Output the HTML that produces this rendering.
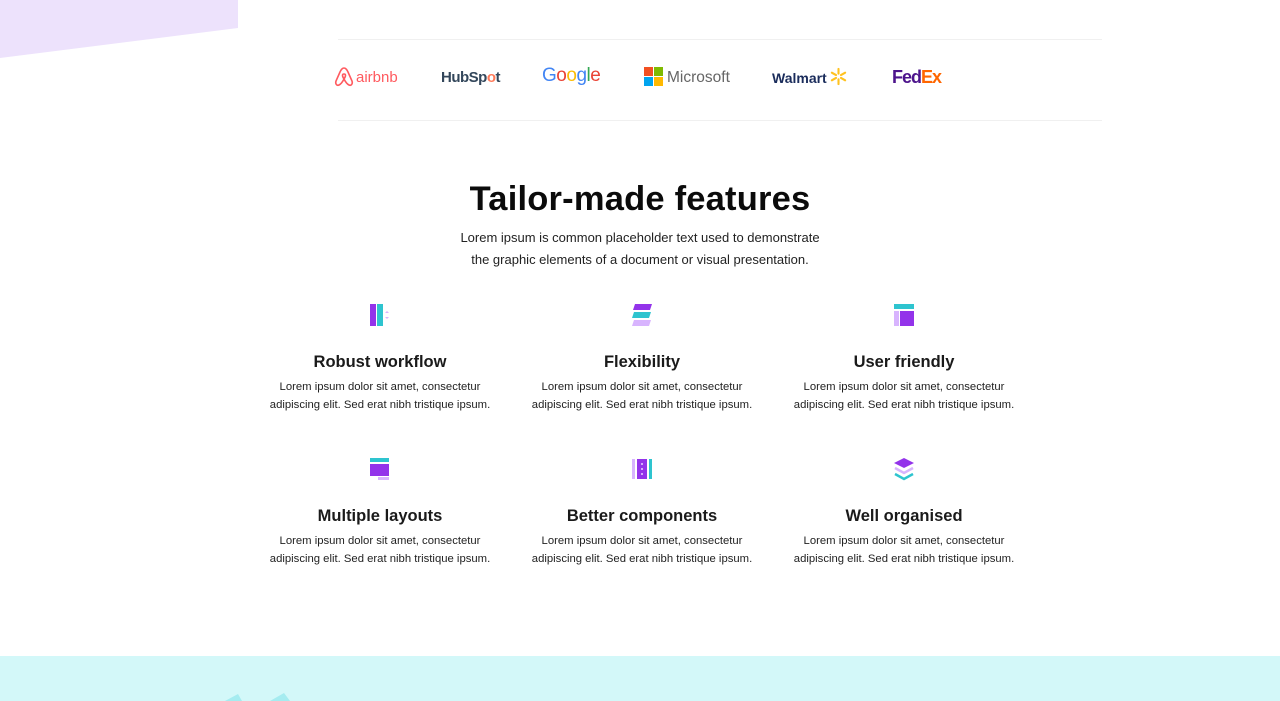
<!DOCTYPE html>
<html><head><meta charset="utf-8"><style>
*{margin:0;padding:0;box-sizing:border-box}
body{width:1280px;height:701px;overflow:hidden;background:#fff;font-family:"Liberation Sans",sans-serif;color:#111;position:relative}
.abs{position:absolute}
.line{position:absolute;left:338px;width:764px;height:1px;background:#f0f0f0}
.logo{position:absolute;top:68px;font-size:15px;font-weight:bold;line-height:20px}
h1{position:absolute;top:180px;left:0;width:1280px;text-align:center;font-size:34.5px;font-weight:bold;letter-spacing:0.2px;color:#0b0b0b}
.sub{position:absolute;top:227px;left:0;width:1280px;text-align:center;font-size:13px;line-height:22px;color:#222}
.f{position:absolute;width:262px;text-align:center}
.f svg{display:block;margin:0 auto}
.f h3{font-size:16.5px;font-weight:bold;color:#1a1a1a;margin-top:25px;line-height:20px}
.f p{font-size:11.3px;line-height:18px;color:#222;margin-top:6px}
</style></head><body>
<svg class="abs" style="left:0;top:0" width="240" height="60"><polygon points="0,0 238,0 238,28 0,58" fill="#ede2fc"/></svg>
<div class="line" style="top:39px"></div>
<div class="line" style="top:120px"></div>
<svg class="abs" style="left:334px;top:66px" width="20" height="21" viewBox="0 0 20 21"><path d="M10 2 C8 2 7 4 6 6 L2 15 C1 18 3 20 5 19 C7 18 9 15 10 13 C11 15 13 18 15 19 C17 20 19 18 18 15 L14 6 C13 4 12 2 10 2Z M10 13 C8 10 8 8 10 8 C12 8 12 10 10 13Z" fill="none" stroke="#ff5a5f" stroke-width="1.6"/></svg>
<div class="logo" style="left:356px;color:#ff5a5f;font-weight:normal;font-size:15px">airbnb</div>
<div class="logo" style="left:441px;color:#33475b;letter-spacing:-0.5px">HubSp<span style="color:#ff7a59">o</span>t</div>
<div class="logo" style="left:542px;top:66px;font-size:19px;font-weight:normal;letter-spacing:-0.5px"><span style="color:#4285f4">G</span><span style="color:#ea4335">o</span><span style="color:#fbbc05">o</span><span style="color:#4285f4">g</span><span style="color:#34a853">l</span><span style="color:#ea4335">e</span></div>
<svg class="abs" style="left:644px;top:67px" width="19" height="19"><rect width="9" height="9" fill="#f25022"/><rect x="10" width="9" height="9" fill="#7fba00"/><rect y="10" width="9" height="9" fill="#00a4ef"/><rect x="10" y="10" width="9" height="9" fill="#ffb900"/></svg>
<div class="logo" style="left:667px;color:#666;font-weight:normal;font-size:15.5px">Microsoft</div>
<div class="logo" style="left:772px;color:#1a2c5b;font-size:14px">Walmart</div>
<svg class="abs" style="left:829px;top:67px" width="19" height="19" viewBox="-10 -10 20 20"><g stroke="#ffc220" stroke-width="2.2" stroke-linecap="round"><line x1="0" y1="-3" x2="0" y2="-8"/><line x1="0" y1="3" x2="0" y2="8"/><line x1="2.6" y1="-1.5" x2="7" y2="-4"/><line x1="-2.6" y1="-1.5" x2="-7" y2="-4"/><line x1="2.6" y1="1.5" x2="7" y2="4"/><line x1="-2.6" y1="1.5" x2="-7" y2="4"/></g></svg>
<div class="logo" style="left:892px;top:67px;font-size:18px;letter-spacing:-1px"><span style="color:#4d148c">Fed</span><span style="color:#ff6600">Ex</span></div>

<h1>Tailor-made features</h1>
<div class="sub">Lorem ipsum is common placeholder text used to demonstrate<br>the graphic elements of a document or visual presentation.</div>

<div class="f" style="left:249px;top:303px">
<svg width="24" height="24" viewBox="0 0 24 24"><rect x="2" y="1" width="6" height="22" fill="#9333ea"/><rect x="9" y="1" width="6" height="22" fill="#2ec4cf"/><path d="M19 8l2 2h-4z M19 16l2-2h-4z" fill="#d8b4fe"/></svg>
<h3>Robust workflow</h3><p>Lorem ipsum dolor sit amet, consectetur<br>adipiscing elit. Sed erat nibh tristique ipsum.</p></div>
<div class="f" style="left:511px;top:303px">
<svg width="24" height="24" viewBox="0 0 24 24"><polygon points="5,1 22,1 20,7 3,7" fill="#9333ea"/><polygon points="4,9 21,9 19,15 2,15" fill="#2ec4cf"/><polygon points="4,17 21,17 19,23 2,23" fill="#d8b4fe"/></svg>
<h3>Flexibility</h3><p>Lorem ipsum dolor sit amet, consectetur<br>adipiscing elit. Sed erat nibh tristique ipsum.</p></div>
<div class="f" style="left:773px;top:303px">
<svg width="24" height="24" viewBox="0 0 24 24"><rect x="2" y="1" width="20" height="5" fill="#2ec4cf"/><rect x="2" y="8" width="5" height="15" fill="#d8b4fe"/><rect x="8" y="8" width="14" height="15" fill="#9333ea"/></svg>
<h3>User friendly</h3><p>Lorem ipsum dolor sit amet, consectetur<br>adipiscing elit. Sed erat nibh tristique ipsum.</p></div>

<div class="f" style="left:249px;top:457px">
<svg width="24" height="24" viewBox="0 0 24 24"><rect x="2" y="1" width="19" height="4" fill="#2ec4cf"/><rect x="2" y="7" width="19" height="12" fill="#9333ea"/><rect x="10" y="20" width="11" height="3" fill="#d8b4fe"/></svg>
<h3>Multiple layouts</h3><p>Lorem ipsum dolor sit amet, consectetur<br>adipiscing elit. Sed erat nibh tristique ipsum.</p></div>
<div class="f" style="left:511px;top:457px">
<svg width="24" height="24" viewBox="0 0 24 24"><rect x="2" y="2" width="3" height="20" fill="#d8b4fe"/><rect x="7" y="2" width="10" height="20" fill="#9333ea"/><rect x="19" y="2" width="3" height="20" fill="#2ec4cf"/><circle cx="12" cy="7" r="1" fill="#e9d5ff"/><circle cx="12" cy="12" r="1" fill="#e9d5ff"/><circle cx="12" cy="17" r="1" fill="#e9d5ff"/></svg>
<h3>Better components</h3><p>Lorem ipsum dolor sit amet, consectetur<br>adipiscing elit. Sed erat nibh tristique ipsum.</p></div>
<div class="f" style="left:773px;top:457px">
<svg width="24" height="24" viewBox="0 0 24 24"><polygon points="12,1 22,6 12,11 2,6" fill="#9333ea"/><path d="M3 11l9 5 9-5" fill="none" stroke="#d8b4fe" stroke-width="2.5"/><path d="M3 17l9 5 9-5" fill="none" stroke="#2ec4cf" stroke-width="2.5"/></svg>
<h3>Well organised</h3><p>Lorem ipsum dolor sit amet, consectetur<br>adipiscing elit. Sed erat nibh tristique ipsum.</p></div>

<div class="abs" style="left:0;top:656px;width:1280px;height:45px;background:#d3f8f9"></div>
<svg class="abs" style="left:220px;top:690px" width="80" height="11"><polygon points="5,11 18,4 22,11" fill="#a5ecf0"/><polygon points="50,11 64,3 70,11" fill="#a5ecf0"/></svg>
</body></html>
